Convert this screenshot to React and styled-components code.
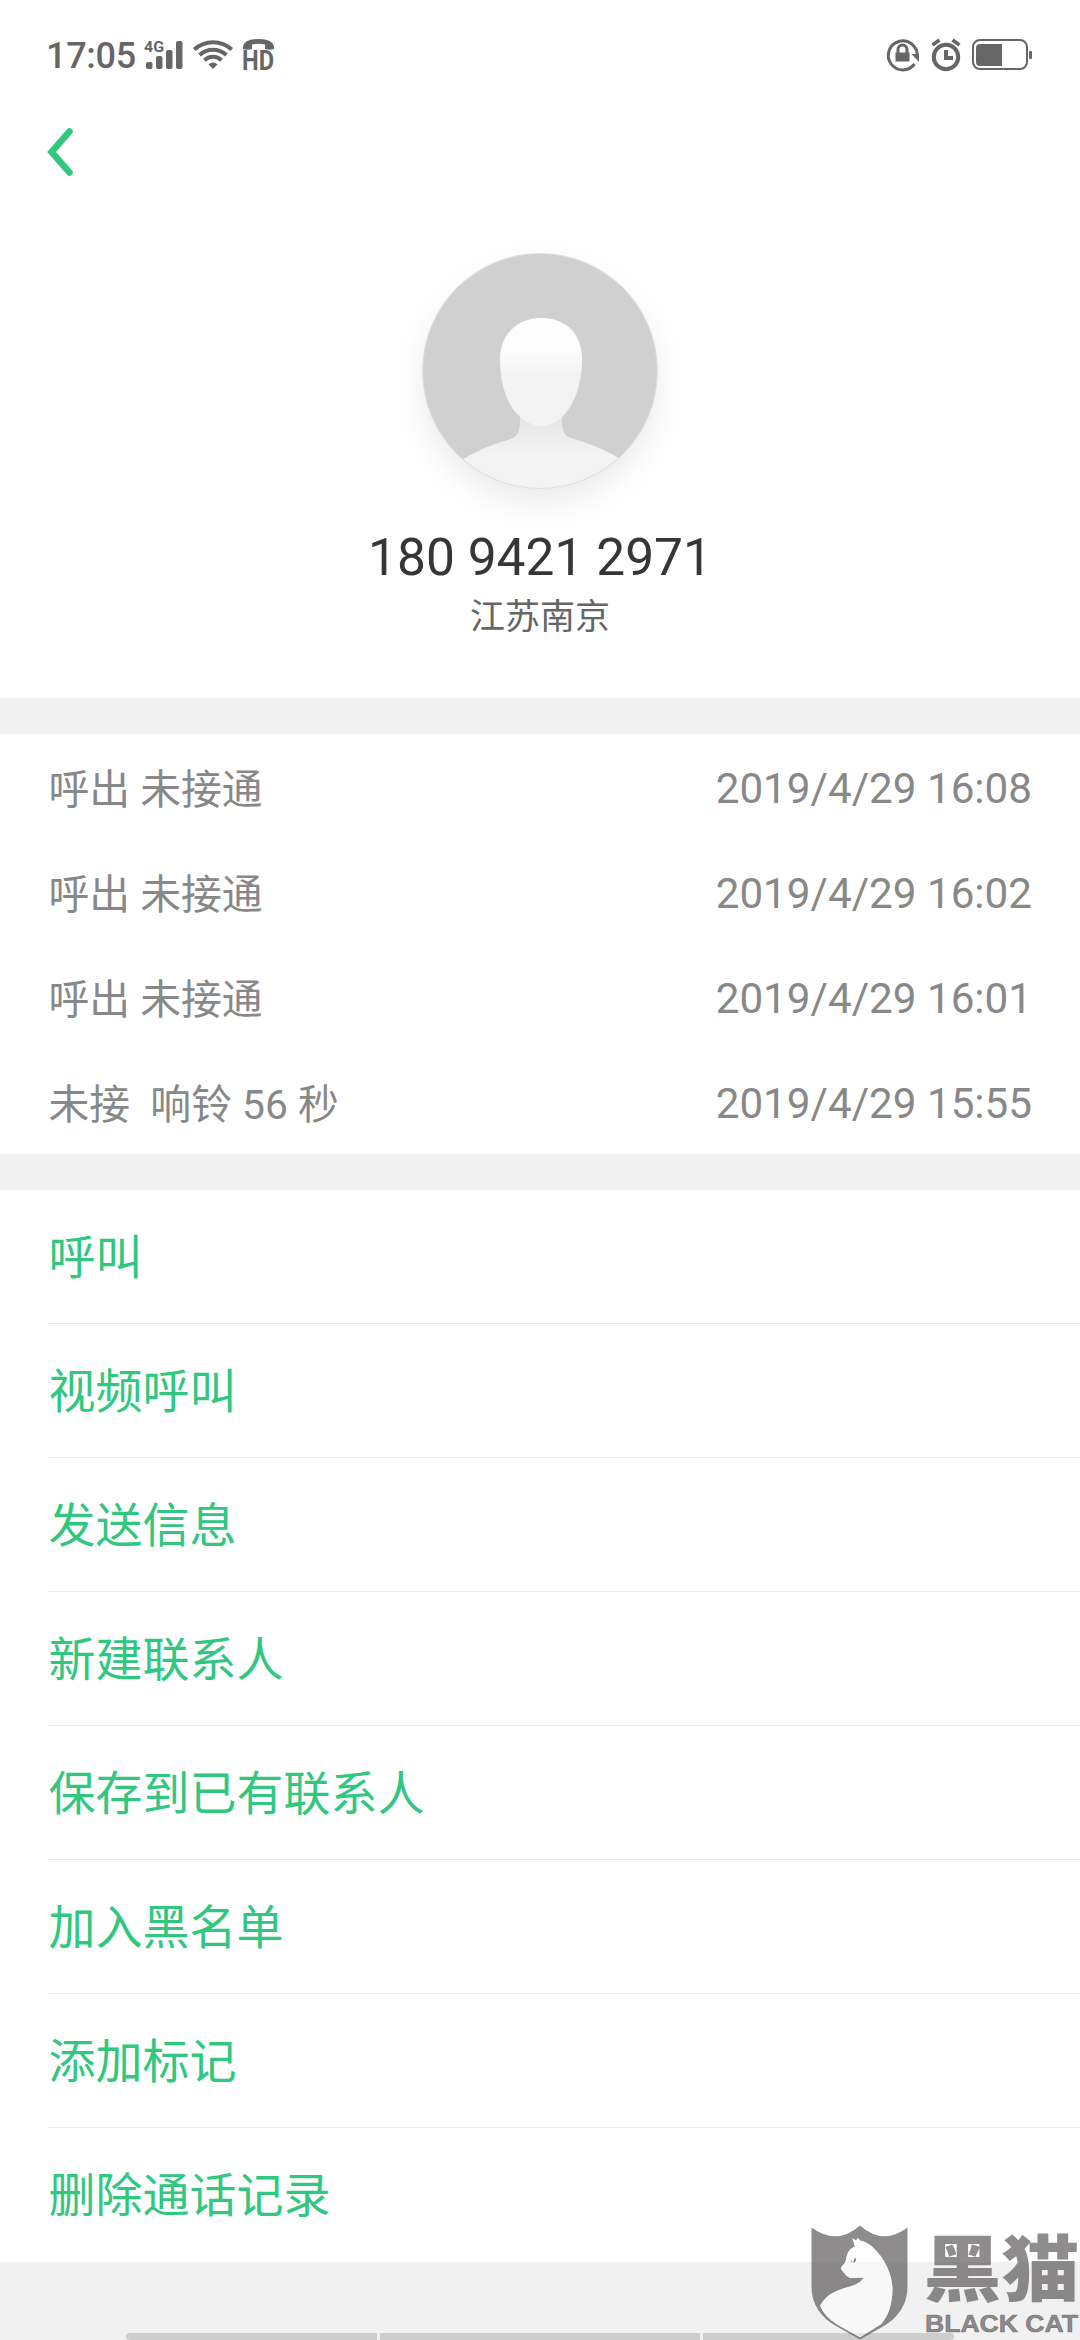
import React from "react";
import styled, { createGlobalStyle } from "styled-components";

const GlobalStyle = createGlobalStyle`
  * {
    box-sizing: border-box;
  }
  body {
    margin: 0;
    background: #fff;
    font-family: Roboto, "Noto Sans CJK SC", sans-serif;
  }
`;

const Screen = styled.div`
  position: relative;
  display: flex;
  flex-direction: column;
  width: 1080px;
  height: 2340px;
  overflow: hidden;
  background: #fff;
`;

const StatusBar = styled.header`
  display: flex;
  justify-content: space-between;
  align-items: center;
  height: 112px;
  padding: 0 48px 0 46px;
  color: #666;
  svg {
    overflow: visible;
  }
`;

const StatusGroup = styled.div`
  display: flex;
  align-items: center;
  gap: ${(props) => props.$gap}px;
  padding-bottom: ${(props) => props.$lift || 0}px;
`;

const Clock = styled.span`
  width: 88px;
  font-size: 36px;
  font-weight: 500;
  line-height: 44px;
  letter-spacing: -0.3px;
`;

const TitleBar = styled.div`
  display: flex;
  align-items: center;
  height: 82px;
  padding: 0 0 2px 47px;
`;

const BackButton = styled.button`
  display: flex;
  padding: 0;
  border: 0;
  background: none;
`;

const Profile = styled.section`
  display: flex;
  flex-direction: column;
  align-items: center;
  height: 504px;
  padding-top: 59px;
`;

const Avatar = styled.div`
  width: 236px;
  height: 236px;
  border-radius: 50%;
  box-shadow: 0 14px 30px rgba(0, 0, 0, 0.08);
  svg {
    display: block;
  }
`;

const PhoneNumber = styled.h1`
  margin: 37px 0 0;
  color: #363636;
  font-size: 51.5px;
  font-weight: 400;
  line-height: 64px;
`;

const Region = styled.p`
  margin: 2px 0 0;
  color: #666;
  font-size: 35px;
  line-height: 52px;
`;

const Gap = styled.div`
  flex: none;
  height: 36px;
  background: #f1f1f1;
`;

const Logs = styled.ul`
  margin: 0;
  padding: 0;
  list-style: none;
`;

const LogRow = styled.li`
  display: flex;
  justify-content: space-between;
  align-items: center;
  height: 105px;
  padding: 5px 48px 0 48.5px;
  color: #888;
  font-size: 42.2px;
  line-height: 60px;
  white-space: pre;
`;

const LogType = styled.span`
  padding-top: 2px;
  font-size: 40.8px;
`;

const Actions = styled.div`
  display: flex;
  flex-direction: column;
  padding-left: 48px;
`;

const Action = styled.button`
  height: 134px;
  padding: 0 0 6px 0.5px;
  border: 0;
  border-bottom: 1px solid ${(props) => (props.$last ? "transparent" : "#e9e9e9")};
  background: none;
  color: #31c77f;
  font-family: inherit;
  font-size: 47px;
  text-align: left;
`;

const Footer = styled.footer`
  display: flex;
  flex: 1;
  justify-content: center;
  align-items: flex-end;
  gap: 3px;
  background: #f1f1f1;
`;

const NavHint = styled.span`
  width: ${(props) => props.$width}px;
  height: 7px;
  border-radius: ${(props) => props.$radius || "0"};
  background: #cdcdcd;
`;

const Watermark = styled.svg`
  position: absolute;
  right: 0;
  bottom: 0;
  overflow: visible;
`;

const logs = [
  { type: "呼出 未接通", time: "2019/4/29 16:08" },
  { type: "呼出 未接通", time: "2019/4/29 16:02" },
  { type: "呼出 未接通", time: "2019/4/29 16:01" },
  { type: "未接  响铃 56 秒", time: "2019/4/29 15:55" },
];

const actions = [
  "呼叫",
  "视频呼叫",
  "发送信息",
  "新建联系人",
  "保存到已有联系人",
  "加入黑名单",
  "添加标记",
  "删除通话记录",
];

const SignalIcon = () => (
  <svg width="39" height="32" viewBox="0 0 39 32" fill="#666">
    <text x="0" y="12" fontSize="14" fontWeight="700" textLength="20" lengthAdjust="spacingAndGlyphs">
      4G
    </text>
    <rect x="2" y="22" width="6.5" height="7" rx="2" />
    <rect x="12" y="16" width="6.5" height="13" rx="2" />
    <rect x="22" y="10" width="6.5" height="19" rx="2" />
    <rect x="32" y="1" width="6.5" height="28" rx="2" />
  </svg>
);

const WifiIcon = () => (
  <svg width="40" height="34" viewBox="0 0 40 34" fill="none" stroke="#666" strokeWidth="4">
    <path d="M1.300 10.500a27.500 27.500 0 0 1 37.400 0" />
    <path d="M6.600 16a19.800 19.800 0 0 1 26.800 0" />
    <path d="M11.500 21.200a12.500 12.500 0 0 1 17 0" />
    <path d="M15.500 25.500q4.500-4 9 0L20 30z" fill="#666" stroke="none" />
  </svg>
);

const HdIcon = () => (
  <svg width="31" height="34" viewBox="0 0 31 34" fill="#666">
    <path d="M0 10V8Q1 0 15.500 0T31 8v2q-4.500 1.500-9 0V5.500q-6.500-1.300-13 0V10q-4.500 1.500-9 0z" />
    <text x="-1" y="31" fontSize="27" fontWeight="700" textLength="32" lengthAdjust="spacingAndGlyphs">
      HD
    </text>
  </svg>
);

const LockIcon = () => (
  <svg width="34" height="34" viewBox="0 0 34 34" fill="none" stroke="#666" strokeWidth="3">
    <path d="M28.500 26A14.500 14.500 0 1 1 31.300 18" />
    <path d="M25.500 16h7.500v8z" fill="#666" stroke="none" />
    <path d="M12 15v-3.500a4.500 4.500 0 0 1 9 0V15" />
    <rect x="9.500" y="14.500" width="14" height="9" fill="#666" stroke="none" />
  </svg>
);

const AlarmIcon = () => (
  <svg width="30" height="34" viewBox="0 0 30 34" fill="none" stroke="#666" strokeWidth="4">
    <circle cx="15" cy="19" r="12.200" />
    <path d="M15 12v8h7" />
    <path d="M1.500 7l7-5M28.500 7l-7-5" strokeWidth="3.500" />
  </svg>
);

const BatteryIcon = () => (
  <svg width="60" height="32" viewBox="0 0 60 32" fill="#666">
    <rect x="1" y="1" width="54" height="29" rx="7" fill="none" stroke="#666" strokeWidth="2" />
    <path d="M8 5h22v22H8q-4 0-4-4V9q0-4 4-4z" />
    <rect x="57" y="12" width="3" height="8" rx="1" />
  </svg>
);

const BackIcon = () => (
  <svg width="28" height="50" viewBox="0 0 28 50" fill="none">
    <path d="M22.500 4.500L4.500 25l18 20.500" stroke="#31c77f" strokeWidth="6.500" strokeLinecap="round" />
  </svg>
);

const Person = () => (
  <svg width="236" height="236" viewBox="0 0 236 236">
    <defs>
      <clipPath id="disc">
        <circle cx="118" cy="118" r="117" />
      </clipPath>
      <linearGradient id="face" x1="0" y1="0" x2="0" y2="1">
        <stop offset="0" stopColor="#fff" />
        <stop offset="0.300" stopColor="#fcfcfc" />
        <stop offset="0.550" stopColor="#f3f3f3" />
      </linearGradient>
      <linearGradient id="body" x1="0" y1="0" x2="0" y2="1">
        <stop offset="0.100" stopColor="#e7e7e7" />
        <stop offset="0.450" stopColor="#f3f3f3" />
      </linearGradient>
    </defs>
    <circle cx="118" cy="118" r="118" fill="#e0e0e0" />
    <g clipPath="url(#disc)">
      <rect width="236" height="236" fill="#d0d0d0" />
      <path
        d="M98 160v9q0 14-9 17-30 8-54 24v40h170v-40q-24-16-56-25-9-2-9-17v-8z"
        fill="url(#body)"
      />
      <path
        d="M119 65c27 0 41 18 41 41 0 42-21 67-40 67s-42-20-42-67c0-23 16-41 41-41z"
        fill="url(#face)"
      />
    </g>
  </svg>
);

const shield =
  "M811.500 2227.500Q837 2246 860 2225.500Q883 2246 907.500 2227.500V2287C907.500 2304 898 2318 883 2326.500L860 2339.500L837 2326.500C821 2318 811.500 2304 811.500 2287Z";

const cat =
  "M852.300 2238.300L856 2240.500L858 2238L860 2240.500Q866 2241.500 872 2246.500C885 2258 892.500 2275 892.500 2289C892.500 2304 888 2317 881 2324.300L860 2337.500L837 2324.500Q824 2316 820 2305.700C828 2291 843 2289 855 2284.700Q861 2282 863.500 2277.700L850 2278Q846 2276.500 845 2274L841.500 2270Q840 2268 842.500 2265.500Q845.500 2263 846 2260C847 2251 851 2248 855 2246.500Z";

const BlackCatMark = () => (
  <Watermark width="270" height="140" viewBox="810 2200 270 140">
    <path d={`${shield}${cat}`} fill="#534f51" fillOpacity="0.650" fillRule="evenodd" />
    <path d={cat} fill="#fff" fillOpacity="0.500" />
    <path
      d="M850.500 2259.500l2 2-1 .500zM855 2257l1 3q-.500 2.500-3 3l1-2.500z"
      fill="#777475"
    />
    <g fill="#534f51" fillOpacity="0.650">
      <text
        x="923.500"
        y="2294.500"
        fontFamily="Noto Sans CJK SC"
        fontSize="72"
        fontWeight="900"
        textLength="156"
        lengthAdjust="spacingAndGlyphs"
      >
        黑猫
      </text>
      <text
        x="925"
        y="2332"
        fontFamily="Liberation Sans"
        fontSize="23.500"
        fontWeight="700"
        stroke="#534f51"
        strokeWidth="0.600"
        strokeOpacity="0.650"
        textLength="153"
        lengthAdjust="spacingAndGlyphs"
      >
        BLACK CAT
      </text>
    </g>
  </Watermark>
);

const App = () => {
  return (
    <>
      <GlobalStyle />
      <Screen>
        <StatusBar>
          <StatusGroup $gap={10}>
            <Clock>17:05</Clock>
            <SignalIcon />
            <WifiIcon />
            <HdIcon />
          </StatusGroup>
          <StatusGroup $gap={11} $lift={2}>
            <LockIcon />
            <AlarmIcon />
            <BatteryIcon />
          </StatusGroup>
        </StatusBar>
        <TitleBar>
          <BackButton aria-label="返回">
            <BackIcon />
          </BackButton>
        </TitleBar>
        <Profile>
          <Avatar>
            <Person />
          </Avatar>
          <PhoneNumber>180 9421 2971</PhoneNumber>
          <Region>江苏南京</Region>
        </Profile>
        <Gap />
        <Logs>
          {logs.map((log) => (
            <LogRow key={log.time}>
              <LogType>{log.type}</LogType>
              <span>{log.time}</span>
            </LogRow>
          ))}
        </Logs>
        <Gap />
        <Actions>
          {actions.map((action, i) => (
            <Action key={action} $last={i === actions.length - 1}>
              {action}
            </Action>
          ))}
        </Actions>
        <Footer>
          <NavHint $width={251} $radius="4px 0 0 4px" />
          <NavHint $width={320} />
          <NavHint $width={251} $radius="0 4px 4px 0" />
        </Footer>
        <BlackCatMark />
      </Screen>
    </>
  );
};

export default App;
